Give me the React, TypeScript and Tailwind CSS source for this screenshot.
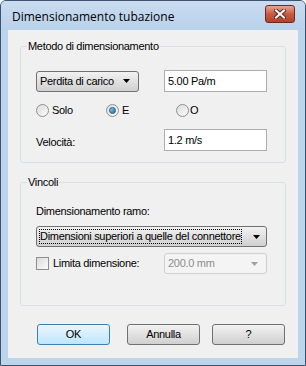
import React from "react";

function ComboArrow({ disabled }: { disabled?: boolean }) {
  return (
    <svg width="7" height="4" viewBox="0 0 7 4" className="shrink-0">
      <path d="M0 0H7L3.5 4Z" fill={disabled ? "#a0a0a0" : "#000"} />
    </svg>
  );
}

function Radio({ checked }: { checked?: boolean }) {
  return (
    <span className="relative flex h-[13px] w-[13px] shrink-0 items-center justify-center rounded-full border border-[#8e8f8f] bg-gradient-to-br from-[#dcdcdc] to-[#fbfbfb]">
      {checked && (
        <span className="h-[7px] w-[7px] rounded-full border border-[#1d5c8e] bg-gradient-to-br from-[#8ad1f4] to-[#1a6ba6]" />
      )}
    </span>
  );
}

function GroupBox({
  label,
  className,
  children,
}: {
  label: string;
  className: string;
  children: React.ReactNode;
}) {
  return (
    <div className={"relative rounded-[3px] border border-[#d5dfe5] " + className}>
      <span className="absolute left-[6px] top-[-8px] bg-[#f0f0f0] px-[1px] leading-[14px]">
        {label}
      </span>
      {children}
    </div>
  );
}

export default function App() {
  return (
    <div
      className="h-[366px] w-[306px] overflow-hidden rounded-t-[6px] border border-[#3e5370] bg-[#bcd4ec] text-[11px] text-black"
      style={{ fontFamily: '"Liberation Sans", Arial, sans-serif' }}
    >
      {/* Title bar */}
      <div className="flex h-[29px] items-center justify-between bg-gradient-to-b from-[#c9dcf0] to-[#b9d1ea] pl-[11px] pr-[10px]">
        <span
          className="pt-[2px] text-[12px] text-black"
          style={{ fontFamily: '"Open Sans", "Noto Sans", sans-serif' }}
        >
          Dimensionamento tubazione
        </span>
        <div className="mt-[-3px] flex h-[18px] w-[30px] items-center justify-center rounded-[3px] border border-[#6b2a20] bg-gradient-to-b from-[#e8a494] via-[#c75a43] to-[#b6412a]">
          <svg width="12" height="10" viewBox="0 0 12 10">
            <path
              d="M2 1.5L10 8.5M10 1.5L2 8.5"
              stroke="#5a2a20"
              strokeWidth="4"
              strokeLinecap="square"
            />
            <path
              d="M2 1.5L10 8.5M10 1.5L2 8.5"
              stroke="#fff"
              strokeWidth="2"
              strokeLinecap="square"
            />
          </svg>
        </div>
      </div>

      {/* Client area */}
      <div className="mx-[7px] h-[328px] whitespace-nowrap bg-[#f0f0f0] px-[12px] pt-[16px] tracking-[-0.3px]">
        <GroupBox label="Metodo di dimensionamento" className="h-[117px] pl-[15px] pt-[23px]">
          <div className="flex items-center">
            <div className="flex h-[21px] w-[103px] items-center justify-between rounded-[3px] border border-[#707070] bg-gradient-to-b from-[#f2f2f2] to-[#d0d0d0] pl-[3px] pr-[8px]">
              <span>Perdita di carico</span>
              <ComboArrow />
            </div>
            <div className="ml-[25px] h-[22px] w-[103px] border border-[#abadb3] bg-white pl-[3px] pt-[2px]">
              5.00 Pa/m
            </div>
          </div>
          <div className="mt-[11px] flex h-[14px] items-center">
            <div className="flex w-[70px] items-center gap-[3px]">
              <Radio />
              <span>Solo</span>
            </div>
            <div className="flex w-[70px] items-center gap-[3px]">
              <Radio checked />
              <span>E</span>
            </div>
            <div className="flex items-center gap-[1px]">
              <Radio />
              <span>O</span>
            </div>
          </div>
          <div className="mt-[12px] flex items-center">
            <span className="w-[128px] pt-[4px]">Velocità:</span>
            <div className="h-[22px] w-[103px] border border-[#abadb3] bg-white pl-[3px] pt-[2px]">
              1.2 m/s
            </div>
          </div>
        </GroupBox>

        <GroupBox label="Vincoli" className="mt-[19px] h-[124px] pl-[15px] pt-[21px]">
          <div className="leading-[14px]">Dimensionamento ramo:</div>
          <div className="mt-[8px] flex h-[21px] w-[231px] items-center justify-between rounded-[3px] border border-[#707070] bg-gradient-to-b from-[#f2f2f2] to-[#d0d0d0] pl-[3px] pr-[6px]">
            <span className="leading-[13px] outline-dotted outline-1 outline-[#000]">
              Dimensioni superiori a quelle del connettore
            </span>
            <ComboArrow />
          </div>
          <div className="mt-[6px] flex items-center">
            <div className="flex w-[128px] items-center gap-[4px]">
              <span className="h-[13px] w-[13px] border border-[#8e8f8f] bg-gradient-to-br from-[#dcdcdc] to-[#fbfbfb]" />
              <span className="text-black">Limita dimensione:</span>
            </div>
            <div className="flex h-[21px] w-[103px] items-center justify-between rounded-[3px] border border-[#cfcfcf] bg-[#f4f4f4] pl-[3px] pr-[8px] text-[#8d8d8d]">
              <span>200.0 mm</span>
              <ComboArrow disabled />
            </div>
          </div>
        </GroupBox>

        <div className="mt-[18px] flex pl-[17px]">
          <button className="h-[21px] w-[73px] rounded-[3px] border border-[#3c7fb1] bg-gradient-to-b from-[#eaf6fd] to-[#bee6fd] text-[11px]">
            OK
          </button>
          <button className="ml-[17px] h-[21px] w-[73px] rounded-[3px] border border-[#707070] bg-gradient-to-b from-[#f2f2f2] to-[#d0d0d0] text-[11px]">
            Annulla
          </button>
          <button className="ml-[12px] h-[21px] w-[73px] rounded-[3px] border border-[#707070] bg-gradient-to-b from-[#f2f2f2] to-[#d0d0d0] text-[11px]">
            ?
          </button>
        </div>
      </div>
    </div>
  );
}
